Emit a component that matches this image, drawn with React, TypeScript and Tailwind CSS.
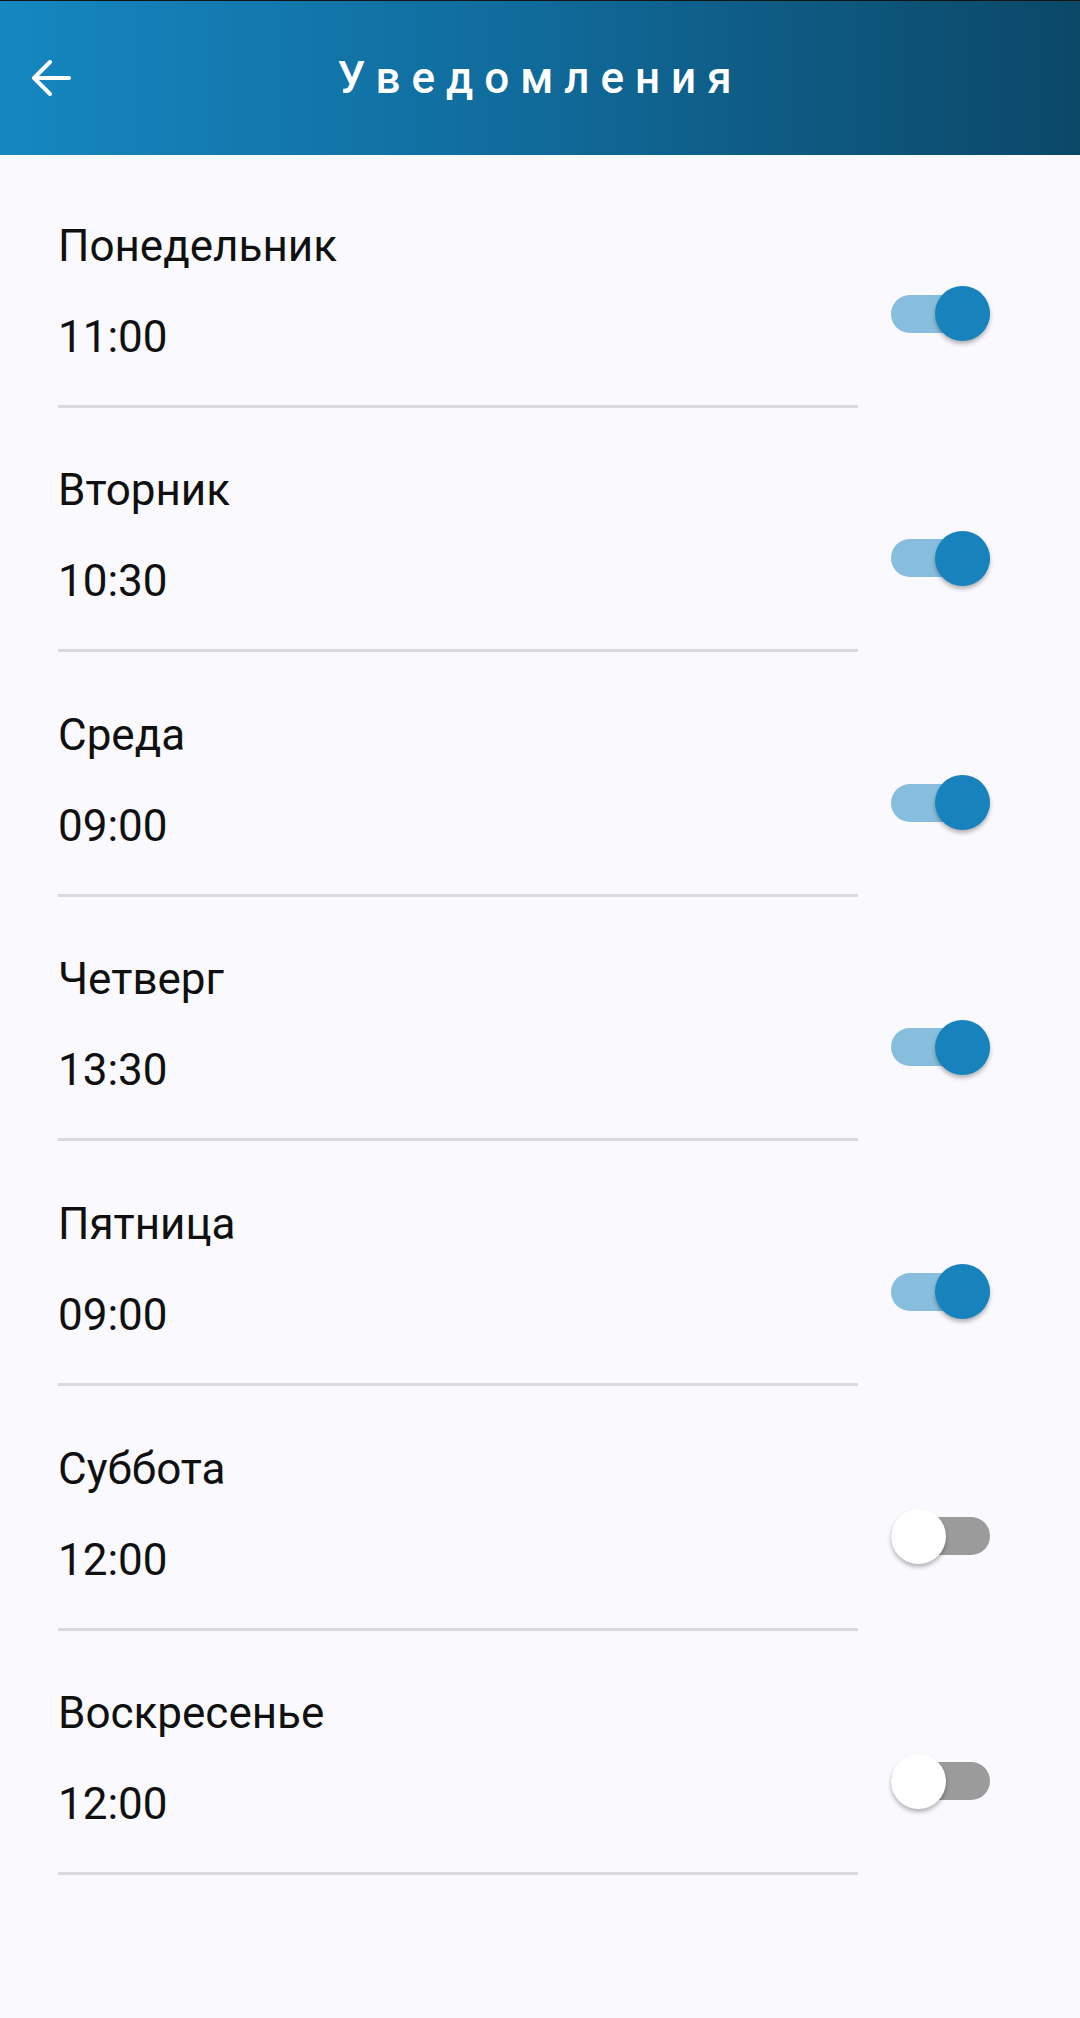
import React from "react";

type Day = { name: string; time: string; on: boolean };

const days: Day[] = [
  { name: "Понедельник", time: "11:00", on: true },
  { name: "Вторник", time: "10:30", on: true },
  { name: "Среда", time: "09:00", on: true },
  { name: "Четверг", time: "13:30", on: true },
  { name: "Пятница", time: "09:00", on: true },
  { name: "Суббота", time: "12:00", on: false },
  { name: "Воскресенье", time: "12:00", on: false },
];

function Toggle({ on }: { on: boolean }) {
  return (
    <div className="relative w-[99px] h-[55px] flex items-center shrink-0">
      <div
        className={`w-full h-[38px] rounded-full ${on ? "bg-[#88bedd]" : "bg-[#9b9b9b]"}`}
      />
      {/* thumb */}
      <div
        className={`absolute top-0 w-[55px] h-[55px] rounded-full shadow-[0_3px_4px_rgba(0,0,0,0.28)] ${
          on ? "right-0 bg-[#1882bc]" : "left-0 bg-white"
        }`}
      />
    </div>
  );
}

function DayRow({ day }: { day: Day }) {
  return (
    <div className="flex pl-[58px]">
      <div className="w-[800px] pt-[56.6px]">
        <p className="text-[44px] leading-[52px] text-[#101010]">{day.name}</p>
        <p className="mt-[39px] text-[44px] leading-[52px] text-[#101010]">{day.time}</p>
        <div className="mt-[42px] h-[3px] bg-[#dadade]" />
      </div>
      <div className="ml-[33px] mt-[123px]">
        <Toggle on={day.on} />
      </div>
    </div>
  );
}

export default function App() {
  return (
    <div
      className="min-h-[2018px] w-[1080px] bg-[#f9f9fe]"
      style={{ fontFamily: "Roboto, 'Noto Sans', sans-serif" }}
    >
      {/* Header */}
      <header className="relative h-[155px] border-t border-[#141414] bg-linear-to-r from-[#1587c1] via-[#106a9a] to-[#0b4868] flex items-center justify-center">
        <button className="absolute left-[31px] top-1/2 -translate-y-1/2">
          <svg width="40" height="36" viewBox="0 0 40 36" fill="none">
            <path
              d="M19 2 L3 18 L19 34 M3 18 H38"
              stroke="white"
              strokeWidth="4"
              strokeLinecap="round"
              strokeLinejoin="round"
            />
          </svg>
        </button>
        <h1 className="text-[44px] font-medium text-white tracking-[11px] leading-none">
          Уведомления
        </h1>
      </header>

      {/* List */}
      <div className="pt-[8px]">
        {days.map((d) => (
          <DayRow key={d.name} day={d} />
        ))}
      </div>
    </div>
  );
}
